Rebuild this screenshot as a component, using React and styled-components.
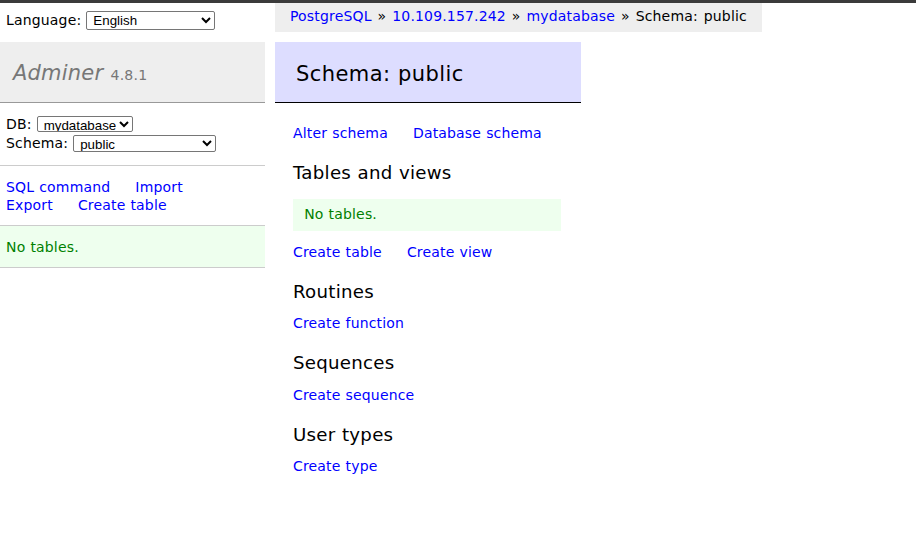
import React from 'react';
import styled, { createGlobalStyle } from 'styled-components';

const Global = createGlobalStyle`
  html, body { margin: 0; padding: 0; background: #fff; }
  body {
    font-family: "DejaVu Sans", Verdana, sans-serif;
    font-size: 14px;
    line-height: 1.25;
    letter-spacing: 0.17px;
    word-spacing: 0.4px;
    color: #000;
  }
  a { color: #00f; text-decoration: none; }
`;

const TopBar = styled.div`
  height: 3px;
  background: #3b3b3b;
`;

const Layout = styled.div`
  display: flex;
  align-items: flex-start;
`;

const Sidebar = styled.aside`
  width: 265px;
  flex: none;
`;

const LangBar = styled.div`
  height: 29px;
  box-sizing: border-box;
  padding: 5px 6px 0;
  line-height: 25px;
`;

const Select = styled.select`
  font-family: "Liberation Sans", Arial, sans-serif;
  font-size: 13.33px;
  letter-spacing: 0;
  word-spacing: 0;
  width: ${p => p.$w}px;
  height: ${p => p.$h || 18}px;
  color: #000;
  background: #fff;
  border: 1px solid #767676;
  border-radius: 2px;
  padding: 0 0 0 2px;
  vertical-align: baseline;
`;

const Logo = styled.h1`
  margin: 10px 0 0;
  padding: 17.8px 13px 15.8px;
  font-size: 21px;
  line-height: 1.25;
  font-weight: normal;
  letter-spacing: 0.2px;
  color: #777;
  background: #eee;
  border-bottom: 1px solid #999;
`;

const LogoLink = styled.a`
  && { color: #777; }
  font-style: italic;
`;

const Version = styled.span`
  font-size: 67%;
  color: #777;
`;

const MenuBlock = styled.div`
  padding: ${p => p.$pad || '12px 6px'};
  border-bottom: 1px solid #ccc;
  line-height: 18px;
  background: ${p => (p.$message ? '#efe' : 'transparent')};
  color: ${p => (p.$message ? 'green' : '#000')};
`;

const SelectRow = styled.div`
  height: 19px;
  display: flex;
  align-items: center;
  gap: 5px;
`;

const NavLink = styled.a`
  white-space: nowrap;
  margin-right: 20px;
`;

const Main = styled.main`
  margin-left: 10px;
  display: flex;
  flex-direction: column;
  align-items: flex-start;
`;

const Breadcrumb = styled.div`
  white-space: nowrap;
  background: #eee;
  height: 29px;
  box-sizing: border-box;
  padding: 1px 15px 0;
  line-height: 25.2px;
  word-spacing: 1.3px;
`;

const Content = styled.div`
  margin-top: 10px;
  padding-left: 18px;
  width: 288px;
`;

const PageTitle = styled.h2`
  font-size: 21px;
  line-height: 1.25;
  font-weight: normal;
  letter-spacing: 0.42px;
  margin: 0 0 22px -18px;
  padding: 18.6px 21px 15px;
  border-bottom: 1px solid #000;
  background: #ddf;
`;

const Links = styled.p`
  margin: 11.5px 20px 0 0;
  white-space: nowrap;
`;

const Section = styled.h3`
  font-size: 18.2px;
  line-height: 1.25;
  font-weight: normal;
  letter-spacing: 0.26px;
  margin: 19.5px 0 0;
`;

const Message = styled.p`
  margin: 14.5px 20px 13.5px 0;
  padding: 7px 11.2px;
  background: #efe;
  color: green;
`;

export default function App() {
  return (
    <>
      <Global />
      <TopBar />
      <Layout>
        <Sidebar>
          <LangBar>
            Language: <Select $w={129} $h={19} defaultValue="en"><option value="en">English</option></Select>
          </LangBar>
          <Logo>
            <LogoLink href="#">Adminer</LogoLink> <Version>4.8.1</Version>
          </Logo>
          <MenuBlock>
            <SelectRow>DB: <Select $w={96} $h={16} defaultValue="db"><option value="db">mydatabase</option></Select></SelectRow>
            <SelectRow>Schema: <Select $w={143} $h={17} defaultValue="public"><option value="public">public</option></Select></SelectRow>
          </MenuBlock>
          <MenuBlock $pad="12px 6px 11px">
            <NavLink href="#">SQL command</NavLink> <NavLink href="#">Import</NavLink>
            <br />
            <NavLink href="#">Export</NavLink> <NavLink href="#">Create table</NavLink>
          </MenuBlock>
          <MenuBlock $message $pad="12.5px 6px 10.5px">No tables.</MenuBlock>
        </Sidebar>
        <Main>
          <Breadcrumb>
            <a href="#">PostgreSQL</a> » <a href="#">10.109.157.242</a> » <a href="#">mydatabase</a> » Schema: public
          </Breadcrumb>
          <Content>
            <PageTitle>Schema: public</PageTitle>
            <Links>
              <NavLink href="#">Alter schema</NavLink> <NavLink href="#">Database schema</NavLink>
            </Links>
            <Section>Tables and views</Section>
            <Message>No tables.</Message>
            <Links>
              <NavLink href="#">Create table</NavLink> <NavLink href="#">Create view</NavLink>
            </Links>
            <Section>Routines</Section>
            <Links><NavLink href="#">Create function</NavLink></Links>
            <Section>Sequences</Section>
            <Links><NavLink href="#">Create sequence</NavLink></Links>
            <Section>User types</Section>
            <Links><NavLink href="#">Create type</NavLink></Links>
          </Content>
        </Main>
      </Layout>
    </>
  );
}
